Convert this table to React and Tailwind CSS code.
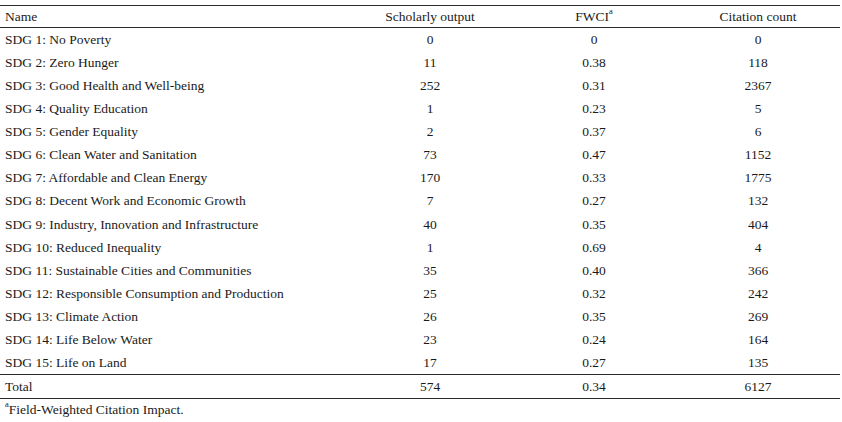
import React from "react";

const rows = [
  ["SDG 1: No Poverty", "0", "0", "0"],
  ["SDG 2: Zero Hunger", "11", "0.38", "118"],
  ["SDG 3: Good Health and Well-being", "252", "0.31", "2367"],
  ["SDG 4: Quality Education", "1", "0.23", "5"],
  ["SDG 5: Gender Equality", "2", "0.37", "6"],
  ["SDG 6: Clean Water and Sanitation", "73", "0.47", "1152"],
  ["SDG 7: Affordable and Clean Energy", "170", "0.33", "1775"],
  ["SDG 8: Decent Work and Economic Growth", "7", "0.27", "132"],
  ["SDG 9: Industry, Innovation and Infrastructure", "40", "0.35", "404"],
  ["SDG 10: Reduced Inequality", "1", "0.69", "4"],
  ["SDG 11: Sustainable Cities and Communities", "35", "0.40", "366"],
  ["SDG 12: Responsible Consumption and Production", "25", "0.32", "242"],
  ["SDG 13: Climate Action", "26", "0.35", "269"],
  ["SDG 14: Life Below Water", "23", "0.24", "164"],
  ["SDG 15: Life on Land", "17", "0.27", "135"],
];

function Row({ cells, className = "" }) {
  return (
    <div className={`grid grid-cols-[348px_164px_164px_164px] items-center ${className}`}>
      <div className="pl-[5px]">{cells[0]}</div>
      <div className="text-center">{cells[1]}</div>
      <div className="text-center">{cells[2]}</div>
      <div className="text-center">{cells[3]}</div>
    </div>
  );
}

export default function App() {
  return (
    <div
      className="w-[842px] h-[422px] bg-white text-[#1a1a1a] text-[13.5px] leading-none pt-[5px]"
      style={{ fontFamily: '"Liberation Serif", "Times New Roman", serif' }}
    >
      <div className="w-[840px]">
        <Row
          className="h-[23px] border-t border-b border-[#2a2a2a]"
          cells={[
            "Name",
            "Scholarly output",
            <span>
              FWCI<sup className="text-[8.5px] align-top relative top-[1px]">a</sup>
            </span>,
            "Citation count",
          ]}
        />
        {rows.map((r, i) => (
          <Row key={i} className="h-[23.1px]" cells={r} />
        ))}
        <Row
          className="h-[25px] border-t border-b border-[#2a2a2a]"
          cells={["Total", "574", "0.34", "6127"]}
        />
        <div className="pl-[5px] pt-[4px]">
          <sup className="text-[8.5px] align-top relative top-[1px]">a</sup>Field-Weighted Citation Impact.
        </div>
      </div>
    </div>
  );
}
